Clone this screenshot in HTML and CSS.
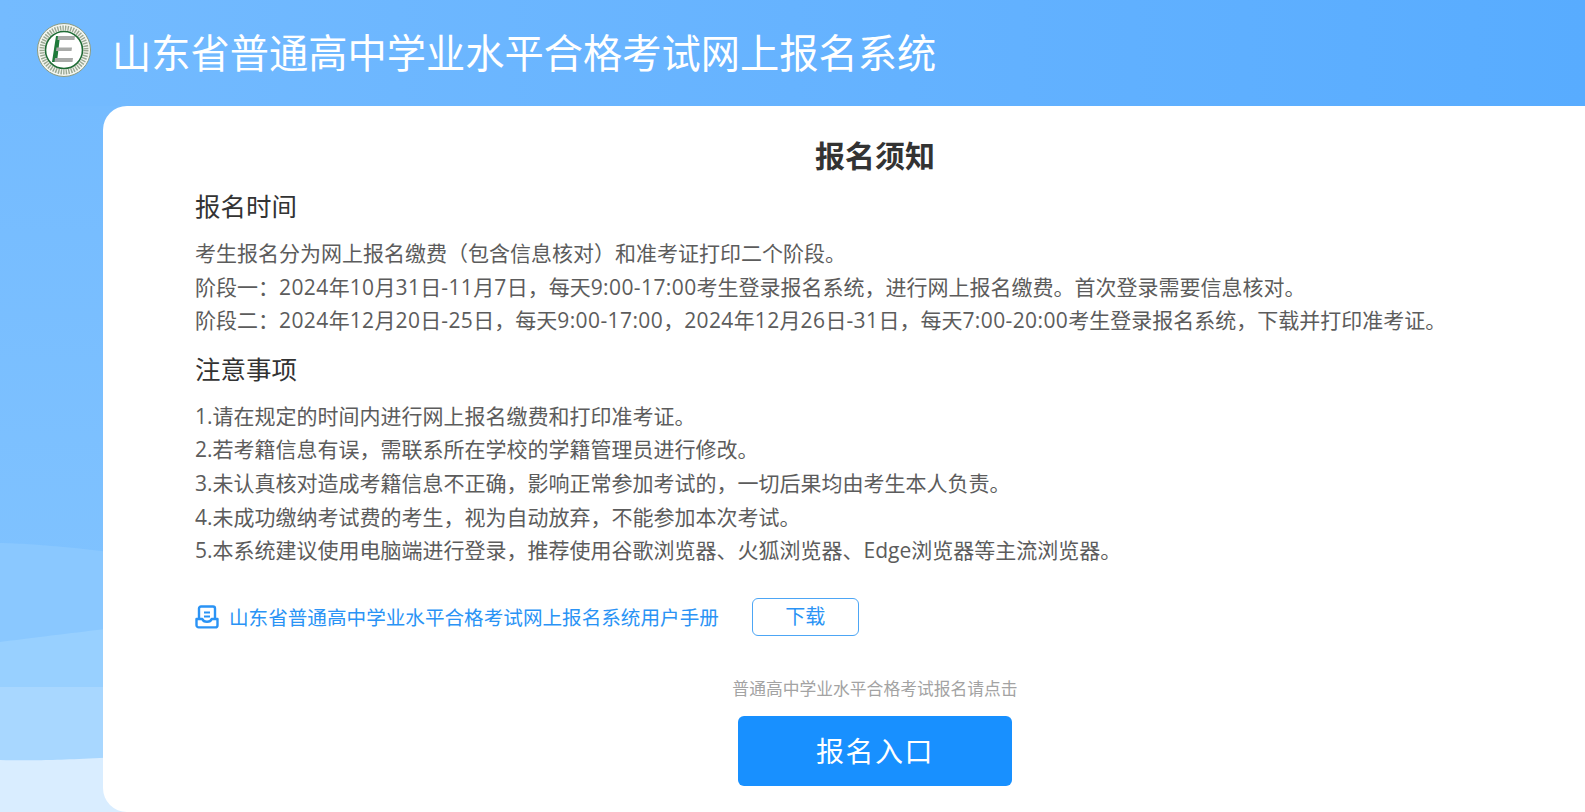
FILE: index.html
```html
<!DOCTYPE html>
<html lang="zh-CN">
<head>
  <meta charset="UTF-8">
  <title>山东省普通高中学业水平合格考试网上报名系统</title>
  <link rel="stylesheet" href="styles.css">
</head>
<body>
  <svg class="bg-waves" viewBox="0 0 1585 812" preserveAspectRatio="none" aria-hidden="true">
    <defs>
      <linearGradient id="bgTop" x1="0" y1="0" x2="1" y2="0">
        <stop offset="0" stop-color="#74bbff"/>
        <stop offset="0.5" stop-color="#66b3ff"/>
        <stop offset="1" stop-color="#58acff"/>
      </linearGradient>
      <linearGradient id="bgLeft" x1="0" y1="0" x2="0" y2="1">
        <stop offset="0" stop-color="#74bbff"/>
        <stop offset="1" stop-color="#7fc2ff"/>
      </linearGradient>
    </defs>
    <rect width="1585" height="812" fill="url(#bgTop)"/>
    <rect y="106" width="200" height="460" fill="url(#bgLeft)"/>
    <path d="M0 543 C40 544 70 547 200 562 V812 H0Z" fill="#8ac8ff"/>
    <path d="M0 642 C40 637 70 633 200 618 V812 H0Z" fill="#98d0ff"/>
    <path d="M0 687 H200 V812 H0Z" fill="#a8d7ff"/>
    <path d="M0 760 C40 761 80 760 200 752 V812 H0Z" fill="#d9edff"/>
  </svg>

  <header class="top-bar">
    <svg class="logo" viewBox="0 0 54 54" aria-hidden="true">
      <circle cx="27" cy="27" r="26.5" fill="#f4f6f0" stroke="#8a9a80"/>
      <circle cx="27" cy="27" r="22" fill="none" stroke="#7d8f76" stroke-width="5" stroke-dasharray="1.4 1.2" opacity=".75"/>
      <circle cx="27" cy="27" r="18.5" fill="#fff" stroke="#1f6b35" stroke-width="1.6"/>
      <polygon points="19,13 23,13 20,39 15,39" fill="#1f7a3a"/>
      <polygon points="21,13 38,13 37.5,17 20.5,17" fill="#a8aaa8"/>
      <polygon points="19.5,24.5 35,24.5 34.5,28 19,28" fill="#a8aaa8"/>
      <polygon points="18,35 36,35 35.5,39 17.500,39" fill="#a8aaa8"/>
    </svg>
    <h1>山东省普通高中学业水平合格考试网上报名系统</h1>
  </header>

  <main class="card">
    <h2 class="card-title">报名须知</h2>

    <h3>报名时间</h3>
    <p class="notes">
      考生报名分为网上报名缴费（包含信息核对）和准考证打印二个阶段。<br>
      阶段一：<span class="num">2024</span>年<span class="num">10</span>月<span class="num">31</span>日<span class="num">-11</span>月<span class="num">7</span>日，每天<span class="num">9:00-17:00</span>考生登录报名系统，进行网上报名缴费。首次登录需要信息核对。<br>
      阶段二：<span class="num">2024</span>年<span class="num">12</span>月<span class="num">20</span>日<span class="num">-25</span>日，每天<span class="num">9:00-17:00</span>，<span class="num">2024</span>年<span class="num">12</span>月<span class="num">26</span>日<span class="num">-31</span>日，每天<span class="num">7:00-20:00</span>考生登录报名系统，下载并打印准考证。
    </p>

    <h3>注意事项</h3>
    <p class="notes">
      1.请在规定的时间内进行网上报名缴费和打印准考证。<br>
      2.若考籍信息有误，需联系所在学校的学籍管理员进行修改。<br>
      3.未认真核对造成考籍信息不正确，影响正常参加考试的，一切后果均由考生本人负责。<br>
      4.未成功缴纳考试费的考生，视为自动放弃，不能参加本次考试。<br>
      5.本系统建议使用电脑端进行登录，推荐使用谷歌浏览器、火狐浏览器、Edge浏览器等主流浏览器。
    </p>

    <div class="manual">
      <svg class="manual-icon" viewBox="0 0 24 24" aria-hidden="true">
        <path d="M4 13V3.500C4 2.400 4.900 1.500 6 1.500h12c1.100 0 2 .9 2 2V13" fill="none" stroke="#2a93f5" stroke-width="2.400"/>
        <path d="M9 7.500h6M9 11.500h6" stroke="#2a93f5" stroke-width="2.200" fill="none"/>
        <path d="M1.500 14h5.800c.6 1.700 2.500 2.700 4.700 2.700s4.100-1 4.700-2.700h5.800v6.200c0 1.200-1 2.200-2.200 2.200H3.700c-1.200 0-2.200-1-2.200-2.200z" fill="none" stroke="#2a93f5" stroke-width="2.400" stroke-linejoin="round"/>
      </svg>
      <a class="manual-link" href="#">山东省普通高中学业水平合格考试网上报名系统用户手册</a>
      <a class="download-btn" href="#">下载</a>
    </div>

    <div class="entry">
      <p class="entry-tip">普通高中学业水平合格考试报名请点击</p>
      <a class="entry-btn" href="#">报名入口</a>
    </div>
  </main>
</body>
</html>
```

FILE: styles.css
```css
html, body {
  margin: 0;
  padding: 0;
  height: 100%;
}
body {
  position: relative;
  overflow: hidden;
  font-family: "Open Sans", "Noto Sans CJK SC", sans-serif;
  color: #333;
}

/* background */
.bg-waves {
  position: absolute;
  top: 0;
  left: 0;
  width: 100%;
  height: 100%;
  z-index: 0;
}

/* header */
.top-bar {
  position: relative;
  z-index: 1;
  height: 106px;
  box-sizing: border-box;
  padding: 0 0 6px 37px;
  display: flex;
  align-items: center;
  gap: 21px;
}
.logo {
  width: 54px;
  height: 54px;
  flex: none;
}
.top-bar h1 {
  margin: 0;
  font-size: 39.25px;
  font-weight: 400;
  color: #fff;
  white-space: nowrap;
}

/* card */
.card {
  position: relative;
  z-index: 1;
  width: 1544px;
  height: 706px;
  margin-left: 103px;
  box-sizing: border-box;
  padding: 29px 92px 0;
  background: #fff;
  border-radius: 24px;
}
.card-title {
  margin: 0;
  font-size: 30px;
  line-height: 42px;
  font-weight: 700;
  text-align: center;
  color: #333;
}
.card h3 {
  margin: 9px 0 0;
  font-size: 25.5px;
  line-height: 40px;
  font-weight: 400;
  color: #333;
}
.notes + h3 {
  margin-top: 11px;
}
.notes {
  margin: 11px 0 0;
  font-size: 21px;
  line-height: 33.6px;
  color: #5c5c5c;
  white-space: nowrap;
}
.num {
  letter-spacing: .4px;
}

/* manual row */
.manual {
  display: flex;
  align-items: center;
  margin-top: 30px;
}
.manual-icon {
  width: 24px;
  height: 24px;
  flex: none;
  margin-right: 10px;
}
.manual-link {
  font-size: 19.6px;
  color: #2a93f5;
  text-decoration: none;
}
.download-btn {
  width: 105px;
  height: 36px;
  margin-left: 33px;
  border: 1px solid #4da6f5;
  border-radius: 6px;
  font-size: 20px;
  line-height: 36px;
  text-align: center;
  color: #2a93f5;
  text-decoration: none;
}

/* entry */
.entry {
  display: flex;
  flex-direction: column;
  align-items: center;
  margin-top: 41px;
}
.entry-tip {
  margin: 0;
  font-size: 16.8px;
  line-height: 24px;
  color: #a3a3a3;
}
.entry-btn {
  width: 274px;
  height: 70px;
  margin-top: 15px;
  border-radius: 6px;
  background: #1890ff;
  color: #fff;
  font-size: 28px;
  line-height: 70px;
  letter-spacing: 1.5px;
  text-align: center;
  text-decoration: none;
}
```
